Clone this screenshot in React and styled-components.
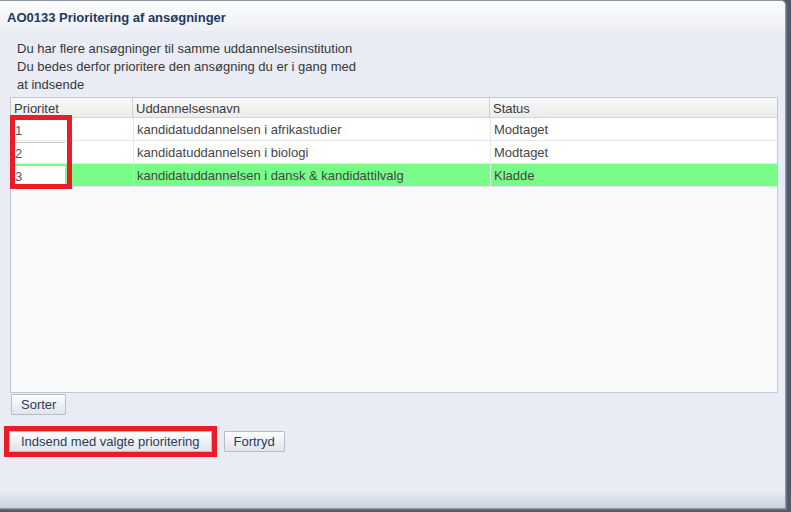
import React from 'react'
import styled, { createGlobalStyle } from 'styled-components'

const GlobalStyle = createGlobalStyle`
  html, body {
    margin: 0;
    padding: 0;
    background: #4f5b6e;
  }
  body {
    font-family: Tahoma, "Liberation Sans", Arial, sans-serif;
    font-size: 13px;
  }
`

const rows = [
  { prio: '1', name: 'kandidatuddannelsen i afrikastudier', status: 'Modtaget' },
  { prio: '2', name: 'kandidatuddannelsen i biologi', status: 'Modtaget' },
  { prio: '3', name: 'kandidatuddannelsen i dansk & kandidattilvalg', status: 'Kladde', active: true },
]

export default function App() {
  return (
    <>
      <GlobalStyle />
      <Page>
        <Dialog>
          <TitleBar>AO0133 Prioritering af ansøgninger</TitleBar>
          <Intro>
            Du har flere ansøgninger til samme uddannelsesinstitution
            <br />
            Du bedes derfor prioritere den ansøgning du er i gang med
            <br />
            at indsende
          </Intro>
          <TableBox>
            <HeaderRow>
              <HeadCell>Prioritet</HeadCell>
              <HeadCell>Uddannelsesnavn</HeadCell>
              <HeadCell $last>Status</HeadCell>
            </HeaderRow>
            {rows.map(r => (
              <Row key={r.prio} $active={r.active}>
                <PrioCell>
                  <PrioInput>{r.prio}</PrioInput>
                </PrioCell>
                <Cell>{r.name}</Cell>
                <Cell>{r.status}</Cell>
              </Row>
            ))}
            <Marker />
          </TableBox>
          <SortRow>
            <Button>Sorter</Button>
          </SortRow>
          <Actions>
            <Highlight>
              <Button $wide>Indsend med valgte prioritering</Button>
            </Highlight>
            <Button>Fortryd</Button>
          </Actions>
          <Footer />
        </Dialog>
      </Page>
    </>
  )
}

const Page = styled.div`
  width: 791px;
  height: 512px;
  overflow: hidden;
`
const Dialog = styled.div`
  width: 786px;
  height: 509px;
  box-sizing: border-box;
  border: 1px solid #8f96a1;
  border-left: none;
  border-top-right-radius: 5px;
  background: #e9ecf4;
  display: flex;
  flex-direction: column;
  box-shadow: 1px 1px 0 #6d7480;
`
const TitleBar = styled.div`
  height: 30px;
  flex: none;
  box-sizing: border-box;
  padding: 9px 0 0 7px;
  font-weight: bold;
  font-size: 13px;
  color: #1e3a5c;
  background: linear-gradient(#fbfcfe, #eef0f6);
  border-top-right-radius: 5px;
`
const Intro = styled.div`
  margin: 9px 0 3px 17px;
  line-height: 18px;
  color: #383838;
`
const TableBox = styled.div`
  position: relative;
  margin-left: 10px;
  width: 768px;
  height: 296px;
  box-sizing: border-box;
  border: 1px solid #c3c8d0;
  background: #f8f9fb;
  flex: none;
`
const grid = `
  display: grid;
  grid-template-columns: 122px 357px 1fr;
`
const HeaderRow = styled.div`
  ${grid}
  height: 19px;
  background: linear-gradient(#f8f8f8, #ececec);
  border-bottom: 1px solid #d4d4d4;
`
const HeadCell = styled.div`
  padding: 3px 0 0 3px;
  color: #3a3a3a;
  border-right: ${({ $last }) => ($last ? 'none' : '1px solid #cfcfcf')};
`
const Row = styled.div`
  ${grid}
  height: 22px;
  border-bottom: 1px solid #e4e6ea;
  background: ${({ $active }) => ($active ? '#79fd88' : '#fff')};
`
const Cell = styled.div`
  padding: 4px 0 0 3px;
  color: #454545;
  border-left: 1px solid #e6e8ec;
`
const PrioCell = styled.div`
  padding: 1px 0 0 2px;
`
const PrioInput = styled.div`
  width: 52px;
  height: 20px;
  box-sizing: border-box;
  padding: 3px 0 0 2px;
  background: #fff;
  border-top: 1px solid #c8c8c8;
  color: #555;
`
const Marker = styled.div`
  position: absolute;
  left: -1px;
  top: 17px;
  width: 62px;
  height: 74px;
  box-sizing: border-box;
  border: 5px solid #ea1c28;
  pointer-events: none;
`
const SortRow = styled.div`
  margin: 1px 0 0 11px;
`
const Button = styled.button`
  height: 21px;
  padding: 0 ${({ $wide }) => ($wide ? '11px' : '9px')};
  white-space: nowrap;
  font-family: Tahoma, "Liberation Sans", Arial, sans-serif;
  font-size: 13px;
  color: #2a3d57;
  background: linear-gradient(#fdfdfe, #e0e4ec);
  border: 1px solid #b7bdc8;
  border-radius: 1px;
  cursor: pointer;
`
const Actions = styled.div`
  display: flex;
  align-items: center;
  gap: 7px;
  margin: 11px 0 0 4px;
`
const Highlight = styled.div`
  border: 5px solid #ea1c28;
  display: flex;
`
const Footer = styled.div`
  margin-top: auto;
  height: 18px;
  background: linear-gradient(#e9ecf4, #cdd2de);
`
